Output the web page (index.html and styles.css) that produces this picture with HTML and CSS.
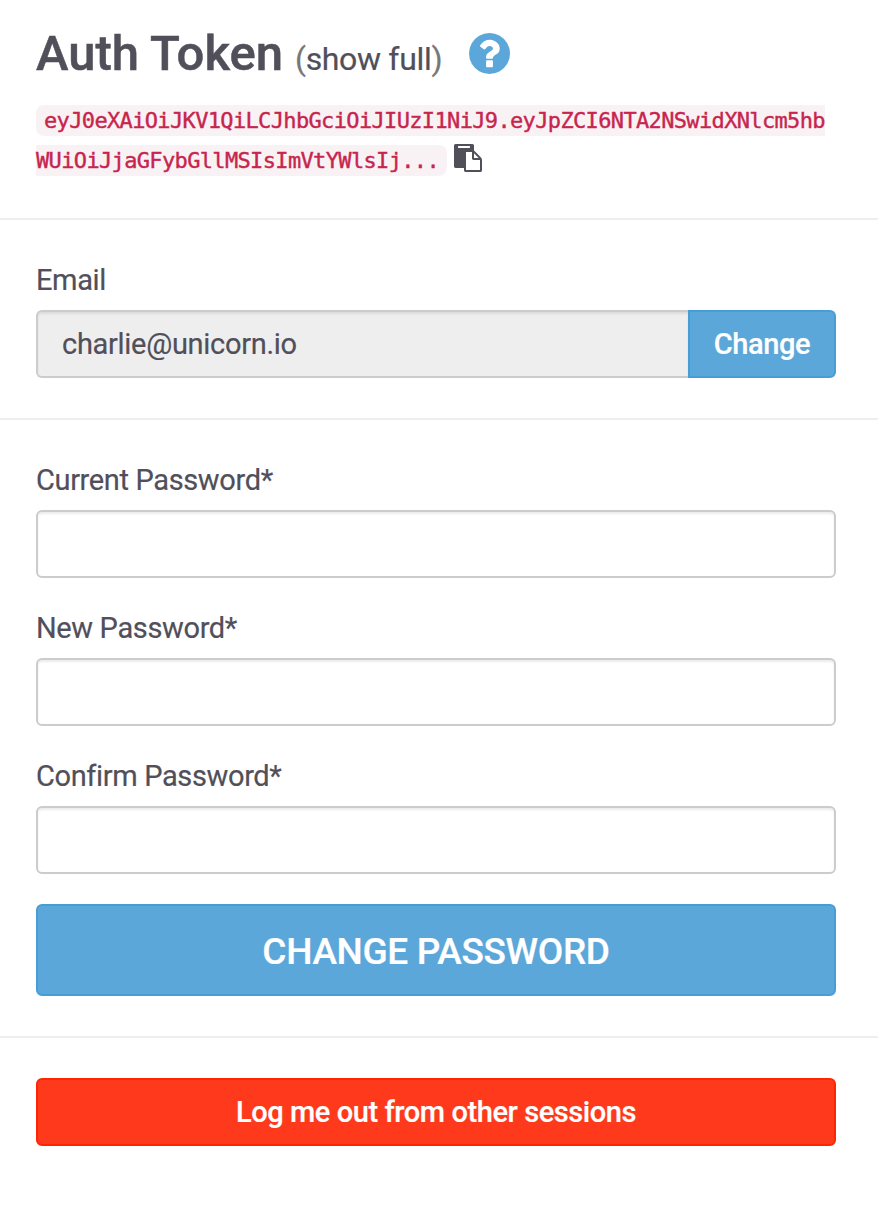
FILE: index.html
```
<!DOCTYPE html>
<html lang="en">
<head>
<meta charset="utf-8">
<title>Account settings</title>
<link rel="stylesheet" href="styles.css">
</head>
<body>
<main>
  <section class="section token">
    <h1 class="heading">
      <span class="title">Auth Token</span>
      <span class="toggle">(<a class="toggle-link">show full</a>)</span>
      <svg class="help" viewBox="128 128 1536 1536" role="img" aria-label="Help"><path d="M1024 1376v-192q0-14-9-23t-23-9h-192q-14 0-23 9t-9 23v192q0 14 9 23t23 9h192q14 0 23-9t9-23zm256-672q0-88-55.500-163t-138.500-116-170-41q-243 0-371 213-15 24 8 42l132 100q7 6 19 6 16 0 25-12 53-68 86-92 34-24 86-24 48 0 85.500 26t37.500 59q0 38-20 61t-68 45q-63 28-115.500 86.500t-52.500 125.500v36q0 14 9 23t23 9h192q14 0 23-9t9-23q0-19 21.500-49.500t54.500-49.500q32-18 49-28.500t46-35 44.500-48 28-60.500 12.500-81zm384 192q0 209-103 385.500t-279.500 279.500-385.500 103-385.500-103-279.500-279.500-103-385.500 103-385.500 279.500-279.500 385.500-103 385.500 103 279.500 279.500 103 385.500z"/></svg>
    </h1>
    <p class="token-line"><code class="code">eyJ0eXAiOiJKV1QiLCJhbGciOiJIUzI1NiJ9.eyJpZCI6NTA2NSwidXNlcm5hb<wbr>WUiOiJjaGFybGllMSIsImVtYWlsIj...</code><svg class="copy" viewBox="0 0 1792 1792" role="img" aria-label="Copy"><path d="M768 1664h896v-640h-416q-40 0-68-28t-28-68v-416h-384v1152zm256-1440v-64q0-13-9.500-22.500t-22.500-9.500h-704q-13 0-22.500 9.500t-9.500 22.500v64q0 13 9.500 22.500t22.500 9.500h704q13 0 22.500-9.500t9.500-22.500zm256 672h299l-299-299v299zm512 128v672q0 40-28 68t-68 28h-960q-40 0-68-28t-28-68v-160h-544q-40 0-68-28t-28-68v-1344q0-40 28-68t68-28h1088q40 0 68 28t28 68v328q21 13 36 28l408 408q28 28 48 76t20 88z"/></svg></p>
  </section>
  <section class="section">
    <label class="label" for="email">Email</label>
    <div class="group">
      <div class="input addon" id="email">charlie@unicorn.io</div>
      <button class="button primary attached">Change</button>
    </div>
  </section>
  <section class="section">
    <div class="field"><label class="label" for="current">Current Password*</label><input class="input" id="current" type="password"></div>
    <div class="field"><label class="label" for="new">New Password*</label><input class="input" id="new" type="password"></div>
    <div class="field"><label class="label" for="confirm">Confirm Password*</label><input class="input" id="confirm" type="password"></div>
    <button class="button primary large">CHANGE PASSWORD</button>
  </section>
  <section class="section">
    <button class="button danger">Log me out from other sessions</button>
  </section>
</main>
</body>
</html>
```
FILE: styles.css
```
* { box-sizing: border-box; }
body {
  margin: 0;
  background: #fff;
  color: #514f59;
  font: 29px/40px Roboto, sans-serif;
  letter-spacing: -0.36px;
  -webkit-text-stroke: 0.2px;
}
.section {
  padding: 40px 42px 40px 36px;
  border-bottom: 2px solid #eee;
}
.section:last-child { border-bottom: 0; }
.token { padding-top: 27px; height: 220px; }
.heading {
  display: flex;
  align-items: baseline;
  height: 53px;
  margin: 0;
  font-weight: 500;
  font-size: 49px;
  line-height: 54px;
}
.title { letter-spacing: 0; -webkit-text-stroke: 0.5px; }
.toggle {
  margin-left: 12px;
  color: #777;
  font-size: 32px;
  font-weight: 400;
  letter-spacing: -0.33px;
}
.toggle-link { color: #514f59; }
.help {
  align-self: center;
  width: 41px;
  height: 41px;
  margin-left: 27px;
  fill: #5ca7d9;
}
.token-line { margin: 21px 0 0; line-height: 0; }
.code {
  padding: 3px 8px;
  border-radius: 8px;
  background: #f9f2f4;
  color: #c7254e;
  font: 22px/40px "DejaVu Sans Mono", monospace;
  letter-spacing: -0.65px;
  -webkit-text-stroke: 0.4px;
}
.copy {
  width: 28px;
  height: 28px;
  margin-left: 7px;
  vertical-align: -4px;
  fill: #514f59;
}
.label { display: block; height: 40px; margin-bottom: 10px; }
.input {
  display: block;
  width: 100%;
  height: 68px;
  padding: 12px 24px;
  border: 2px solid #ccc;
  border-radius: 6px;
  background: #fff;
  box-shadow: inset 0 2px 2px rgba(0, 0, 0, .075);
  color: #514f59;
  font: inherit;
}
.addon { letter-spacing: -0.3px; }
.group { display: flex; }
.addon { flex: 1; background: #eee; border-right: 0; border-radius: 6px 0 0 6px; }
.field { margin-bottom: 30px; }
.button {
  display: block;
  width: 100%;
  height: 68px;
  padding: 0;
  border: 2px solid;
  border-radius: 6px;
  color: #fff;
  font: 500 29px/40px Roboto, sans-serif;
  letter-spacing: -0.42px;
}
.primary { background: #5ca7d9; border-color: #479dd5; }
.danger { background: #ff3a1c; border-color: #ff2503; }
.attached { width: 148px; border-radius: 0 6px 6px 0; }
.large { height: 92px; padding-top: 3px; font-size: 37px; letter-spacing: -0.35px; }
```
